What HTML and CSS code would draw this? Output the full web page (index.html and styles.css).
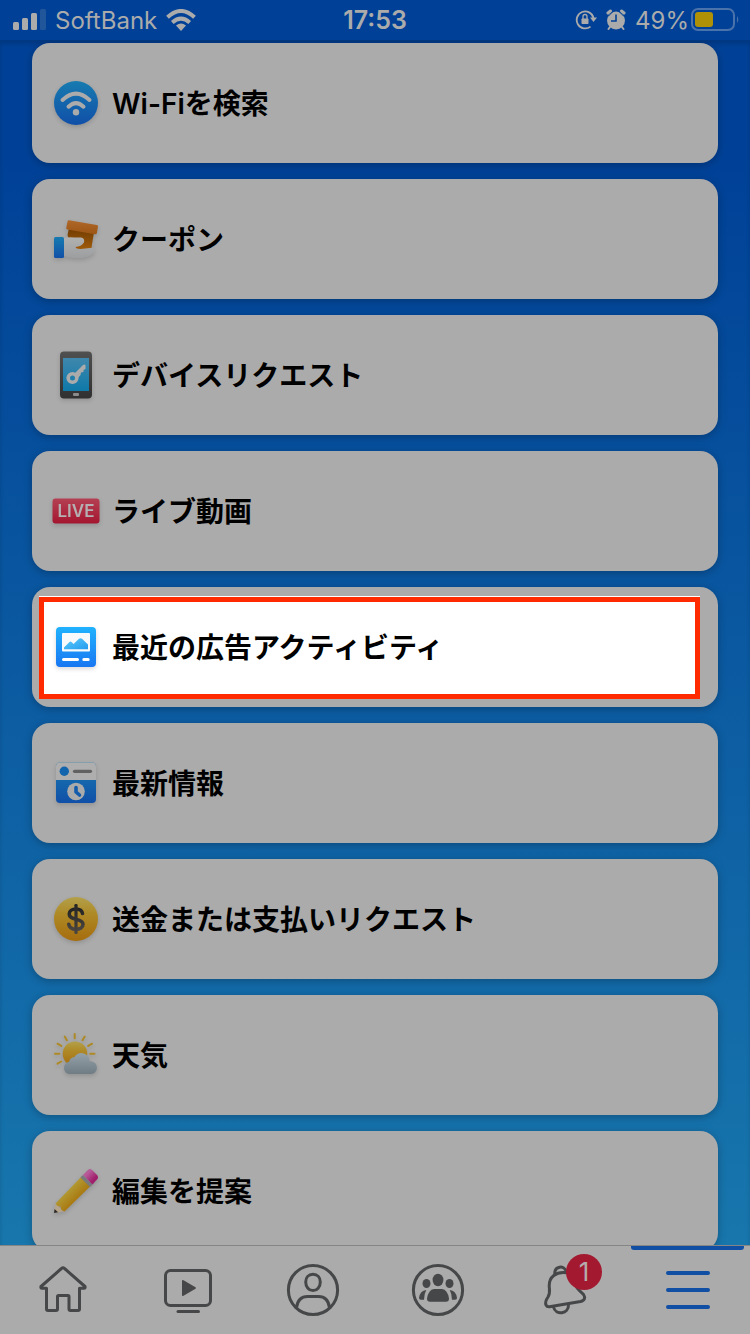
FILE: index.html
```html
<!DOCTYPE html>
<html lang="ja">
<head>
    <meta charset="UTF-8">
    <meta name="viewport" content="width=device-width, initial-scale=1.0">
    <title>メニュー</title>
    <link rel="stylesheet" href="styles.css">
</head>
<body>
    <header class="status">
        <div class="status-left">
            <svg width="33" height="22" viewBox="0 0 33 22">
                <g fill="#ababab">
                    <rect x="0" y="13" width="6" height="8" rx="1.5"/>
                    <rect x="9" y="9" width="6" height="12" rx="1.5"/>
                    <rect x="18" y="4" width="6" height="17" rx="1.5"/>
                    <rect x="27" y="0" width="6" height="21" rx="1.5" opacity=".2"/>
                </g>
            </svg>
            <span class="carrier">SoftBank</span>
            <svg width="30" height="22" viewBox="0 0 30 22">
                <g fill="none" stroke="#ababab" stroke-width="4">
                    <path d="M1.500 8.300Q15-4.300 28.500 8.300"/>
                    <path d="M6.300 13.500Q15 5.700 23.700 13.500"/>
                </g>
                <path d="M10 16.500Q15 12.500 20 16.500L15 22Z" fill="#ababab"/>
            </svg>
        </div>
        <span class="time">17:53</span>
        <div class="status-right">
            <svg width="22" height="22" viewBox="0 0 22 22">
                <path d="M15.500 17.600A8.500 8.500 0 1 1 18.500 9" fill="none" stroke="#ababab" stroke-width="1.800"/>
                <path d="M15 8.500h7l-3.500 4.500z" fill="#ababab"/>
                <rect x="6.500" y="9.500" width="7" height="5.500" rx=".8" fill="#ababab"/>
                <path d="M8 10V7.500a2 2 0 0 1 4 0V10" fill="none" stroke="#ababab" stroke-width="1.300"/>
            </svg>
            <svg width="20" height="22" viewBox="0 0 20 22">
                <circle cx="10" cy="11.500" r="9" fill="#ababab"/>
                <g stroke="#ababab" stroke-width="3" stroke-linecap="round">
                    <path d="M2 4L4.500 2M18 4L15.500 2"/>
                    <path d="M4 18L2.500 20M16 18L17.500 20" stroke-width="2"/>
                </g>
                <path d="M2 7.500L7 2.500M18 7.500L13 2.500" stroke="#004197"/>
                <path d="M10 5.500V12H5" fill="none" stroke="#004197" stroke-width="1.600"/>
            </svg>
            <span class="percent">49%</span>
            <svg width="48" height="24" viewBox="0 0 48 24">
                <rect x="1" y="1" width="42" height="21" rx="6" fill="none" stroke="#4a72ab" stroke-width="2"/>
                <rect x="4" y="4" width="18" height="15" rx="3" fill="#af9108"/>
                <path d="M46 8q2.500 3.500 0 7z" fill="#4a72ab"/>
            </svg>
        </div>
    </header>

    <main class="list">
        <a class="card" href="#">
            <svg class="icon" viewBox="0 0 48 48">
                <defs>
                    <linearGradient id="blue" x2="0" y2="1"><stop stop-color="#177bb0"/><stop offset="1" stop-color="#104fa8"/></linearGradient>
                </defs>
                <circle cx="24" cy="24" r="22" fill="url(#blue)"/>
                <g fill="none" stroke="#ababab" stroke-width="4" stroke-linecap="round">
                    <path d="M10.500 21Q24 8.300 37.500 21"/>
                    <path d="M16.500 27.700Q24 20.500 31.500 27.700"/>
                </g>
                <circle cx="24" cy="33.300" r="3.200" fill="#ababab"/>
            </svg>
            <span class="label">Wi-Fiを検索</span>
        </a>
        <a class="card" href="#">
            <svg class="icon" viewBox="0 0 48 48">
                <defs>
                    <linearGradient id="roll" x2="0" y2="1"><stop stop-color="#b0682a"/><stop offset="1" stop-color="#9d5514"/></linearGradient>
                    <linearGradient id="ticket" x2="0" y2="1"><stop stop-color="#703b00"/><stop offset="1" stop-color="#9e5b0c"/></linearGradient>
                    <linearGradient id="hand" x2="0" y2="1"><stop stop-color="#b1b1b1"/><stop offset="1" stop-color="#9c9ea0"/></linearGradient>
                </defs>
                <path d="M17 13L42 17.500C41 24 40 28 39.500 34H20L15.500 20Z" fill="url(#ticket)"/>
                <path d="M17 5.200L44.800 10.100Q46.200 10.400 46 11.800L44.800 18.200Q44.500 19.600 43 19.300L15.500 14.500Q14 14.100 14.300 12.700L15.600 6.200Q15.800 5 17 5.200Z" fill="url(#roll)"/>
                <path d="M12 23Q17 21.800 22 22.500H29Q33 23 32 27.500Q29.500 31.500 23.500 32Q24 34.500 31 33.800L40 32.800Q43.500 33.500 42 37.500Q37 43 27 43Q18 43 12 41Z" fill="url(#hand)"/>
                <rect x="2" y="22" width="10" height="21" rx="1.500" fill="url(#blue)"/>
            </svg>
            <span class="label">クーポン</span>
        </a>
        <a class="card" href="#">
            <svg class="icon" viewBox="0 0 48 48">
                <defs>
                    <linearGradient id="body" x2="0" y2="1"><stop stop-color="#505050"/><stop offset="1" stop-color="#303030"/></linearGradient>
                    <linearGradient id="screen" x2="0" y2="1"><stop stop-color="#3f87ac"/><stop offset="1" stop-color="#0e79a9"/></linearGradient>
                </defs>
                <rect x="8" y="0.500" width="32" height="47" rx="4" fill="url(#body)"/>
                <rect x="11" y="7" width="26" height="33" fill="url(#screen)"/>
                <rect x="21" y="42" width="6" height="3" rx="1" fill="#8b8b8b"/>
                <circle cx="20.500" cy="27" r="4.300" fill="none" stroke="#ababab" stroke-width="3.600"/>
                <path d="M22.500 22.500L31 14Q33.500 13 33.500 14.500V18L31.500 19V21L29 21.500L28.500 24L26 27Z" fill="#ababab"/>
            </svg>
            <span class="label">デバイスリクエスト</span>
        </a>
        <a class="card" href="#">
            <svg class="icon" viewBox="0 0 48 48">
                <defs>
                    <linearGradient id="red" x2="0" y2="1"><stop stop-color="#b54053"/><stop offset="1" stop-color="#a4162f"/></linearGradient>
                </defs>
                <rect x="0.500" y="11.500" width="47" height="25" rx="3" fill="url(#red)"/>
                <text class="live" x="24" y="30" text-anchor="middle">LIVE</text>
            </svg>
            <span class="label">ライブ動画</span>
        </a>
        <a class="card selected" href="#">
            <svg class="icon" viewBox="0 0 48 48">
                <defs>
                    <linearGradient id="bright" x2="0" y2="1"><stop stop-color="#20b2ff"/><stop offset="1" stop-color="#1877f2"/></linearGradient>
                    <linearGradient id="hills" x2="1" y2="1"><stop stop-color="#5cccfa"/><stop offset="1" stop-color="#249bf0"/></linearGradient>
                </defs>
                <rect x="4" y="4" width="40" height="40" rx="4" fill="url(#bright)"/>
                <rect x="10" y="10" width="28" height="18.500" rx="1" fill="#f7f9fa"/>
                <path d="M12 26.300V24.500L17.500 19Q18.500 18 19.500 19L21.500 21L27 15.800Q28.500 14.500 30 15.800L36 21.500V26.300Z" fill="url(#hills)"/>
                <path d="M11.500 36.500H25.500M31.800 36.500H36.200" stroke="#fff" stroke-width="3" stroke-linecap="round"/>
            </svg>
            <span class="label">最近の広告アクティビティ</span>
        </a>
        <a class="card" href="#">
            <svg class="icon" viewBox="0 0 48 48">
                <rect x="4" y="3.500" width="40" height="40.500" rx="4" fill="url(#blue)"/>
                <path d="M4 21V7.500Q4 3.500 8 3.500H40Q44 3.500 44 7.500V21Z" fill="#aeaeae"/>
                <circle cx="12.300" cy="12.300" r="4.700" fill="#1265ac"/>
                <path d="M22.500 12.300H38.500" stroke="#616161" stroke-width="3.200" stroke-linecap="round"/>
                <circle cx="24" cy="32.500" r="8.800" fill="#ababab"/>
                <path d="M24 28.500V33L27.500 36" fill="none" stroke="#125cab" stroke-width="3.600" stroke-linecap="round" stroke-linejoin="round"/>
            </svg>
            <span class="label">最新情報</span>
        </a>
        <a class="card" href="#">
            <svg class="icon" viewBox="0 0 48 48">
                <defs>
                    <linearGradient id="gold" x2="0" y2="1"><stop stop-color="#b3a04a"/><stop offset=".4" stop-color="#ae8925"/><stop offset="1" stop-color="#a66c0d"/></linearGradient>
                    <linearGradient id="ink" x2="0" y2="1"><stop stop-color="#242424"/><stop offset="1" stop-color="#4a4540"/></linearGradient>
                </defs>
                <circle cx="24" cy="24" r="22" fill="url(#gold)"/>
                <path d="M30.500 18.500C30 15.500 27.500 14 24 14C20 14 17.200 16 17.200 19C17.200 22.500 20 23.300 24 24.200C28.500 25.200 31 26.200 31 29.300C31 32.500 28 34.300 24 34.300C20 34.300 17.200 32.500 16.800 29.300" fill="none" stroke="url(#ink)" stroke-width="3.600" stroke-linecap="round"/>
                <rect x="22.400" y="9" width="3.200" height="30" rx="1.200" fill="url(#ink)"/>
            </svg>
            <span class="label">送金または支払いリクエスト</span>
        </a>
        <a class="card" href="#">
            <svg class="icon" viewBox="0 0 48 48">
                <defs>
                    <linearGradient id="cloud" x2="0" y2="1"><stop stop-color="#94a1a9"/><stop offset="1" stop-color="#6f7c83"/></linearGradient>
                </defs>
                <circle cx="23" cy="22.700" r="12.300" fill="url(#gold)"/>
                <path d="M22.700 3V7.300M12.700 5.500L14.900 9.300M5.500 12.700L9.300 14.900M3 22.700H7.300M5.500 32.700L9.300 30.500M32.700 5.500L30.500 9.300M40 12.700L36.200 14.900M42.500 22.700H38.200" stroke="#ae8a25" stroke-width="2" stroke-linecap="round"/>
                <path d="M18 43Q12 42.500 12 37Q12.300 31.800 17 30.800Q18 26.500 22.500 26Q25 22 29.500 22Q36.500 22.500 37.500 30Q45 30.500 45 37Q44.500 42.500 39 43Z" fill="url(#cloud)"/>
            </svg>
            <span class="label">天気</span>
        </a>
        <a class="card" href="#">
            <svg class="icon" viewBox="0 0 48 48">
                <defs>
                    <linearGradient id="wood" x2="1" y2="1"><stop offset=".35" stop-color="#b29b35"/><stop offset=".65" stop-color="#a9760d"/></linearGradient>
                    <linearGradient id="rubber" x2="1" y2="1"><stop offset=".3" stop-color="#b65a98"/><stop offset=".7" stop-color="#a01f6c"/></linearGradient>
                </defs>
                <path d="M2 46L3.500 36.500L11.500 44.500Z" fill="#b6a48c"/>
                <path d="M2 46L2.600 42L6 45.300Z" fill="#292929"/>
                <path d="M3.500 36.500L29.500 9.500L39 18.500L12.500 44.500L9.500 43L8.500 39.500L5.500 39Z" fill="url(#wood)"/>
                <path d="M28.500 10.500L31 8L40.500 17.500L38 20Z" fill="#77797c"/>
                <path d="M31 8L36 3Q38 1 40 3L45 8Q47 10 45 12.500L40.500 17.500Z" fill="url(#rubber)"/>
            </svg>
            <span class="label">編集を提案</span>
        </a>
    </main>

    <nav class="tabs">
        <a class="tab" href="#" aria-label="ホーム">
            <svg viewBox="0 0 56 56">
                <path d="M26.500 6.500Q28 5 29.500 6.500L50 24.500Q50.500 26.300 49 26.300H44.500V47Q44.500 48.500 43 48.500H35.500Q34 48.500 34 47V34.500Q34 33.500 33 33.500H23.500Q22.500 33.500 22.500 34.500V47Q22.500 48.500 21 48.500H13Q11.500 48.500 11.500 47V26.300H7Q5.500 26.300 6 24.500Z"/>
            </svg>
        </a>
        <a class="tab" href="#" aria-label="動画">
            <svg viewBox="0 0 56 56">
                <rect x="5.500" y="8.500" width="45" height="35" rx="5"/>
                <path class="solid" d="M22 19Q22 17.500 23.500 18.300L35.500 25.200Q36.500 26 35.500 26.800L23.500 33.700Q22 34.500 22 33Z"/>
                <path d="M18 49.500H38.500"/>
            </svg>
        </a>
        <a class="tab" href="#" aria-label="プロフィール">
            <svg viewBox="0 0 56 56">
                <circle cx="28" cy="28" r="24.600"/>
                <path d="M28 12.300C32.500 12.300 35.300 15.500 35.300 20C35.300 25 32 28.600 28 28.600C24 28.600 20.700 25 20.700 20C20.700 15.500 23.500 12.300 28 12.300Z"/>
                <path d="M11.500 45.500C12.500 38.500 16.500 34.500 22.500 34.500H33.500C39.500 34.500 43.500 38.500 44.500 45.500"/>
            </svg>
        </a>
        <a class="tab" href="#" aria-label="グループ">
            <svg viewBox="0 0 56 56">
                <circle cx="28" cy="28" r="24.600"/>
                <g class="solid">
                    <ellipse cx="28" cy="18" rx="5.400" ry="6.200"/>
                    <ellipse cx="16.500" cy="21.500" rx="4" ry="4.600"/>
                    <ellipse cx="39.500" cy="21.500" rx="4" ry="4.600"/>
                    <path d="M24 27H32Q37.500 27.500 39 36.500Q39 39.700 36 39.700H20Q17 39.700 17 36.500Q18.500 27.500 24 27Z"/>
                    <path d="M16.300 28Q10 28.500 9 36Q9 37.800 11 37.800H14Q14 32 16.300 28ZM39.700 28Q46 28.500 47 36Q47 37.800 45 37.800H42Q42 32 39.700 28Z"/>
                </g>
            </svg>
        </a>
        <a class="tab" href="#" aria-label="お知らせ">
            <svg viewBox="0 0 56 56">
                <path d="M19.800 11.500C19.500 4 29 3 31 9"/>
                <path d="M31 10.700C21 9.500 14 15 14.200 24C14.400 28 15.500 31 13 35C10.500 38.500 10 40.500 11 43Q12 45 14.500 44.700L45.500 39.500C50 38.500 50.500 35.500 48.500 32.500C46 29.500 43.500 28.500 41.500 25"/>
                <path d="M18.500 45C20.500 53.500 34 52.500 33.500 42.500"/>
            </svg>
            <span class="badge">1</span>
        </a>
        <a class="tab active" href="#" aria-label="メニュー">
            <svg viewBox="0 0 56 56">
                <path d="M8 11H48M8 28H48M8 45H48"/>
            </svg>
        </a>
    </nav>
</body>
</html>
```
FILE: styles.css
```css
* {
    box-sizing: border-box;
}

body {
    display: flex;
    flex-direction: column;
    height: 100vh;
    margin: 0;
    overflow: hidden;
    font-family: Inter, "Noto Sans CJK JP", sans-serif;
    background: linear-gradient(#004197 12%, #1877ad 94%);
}

a {
    color: inherit;
    text-decoration: none;
}

svg {
    flex: none;
}

/* status bar */
.status {
    display: grid;
    grid-template-columns: 1fr auto 1fr;
    align-items: center;
    height: 40px;
    padding: 0 11px;
    flex: none;
    font-size: 24px;
    color: #ababab;
    background-color: #004197;
}

.status-left,
.status-right {
    display: flex;
    align-items: center;
    gap: 9px;
}

.status-left {
    padding-left: 2px;
}

.status-right {
    justify-content: flex-end;
}

.time {
    font-size: 25px;
    font-weight: 600;
}

.percent {
    margin-right: -7px;
}

/* shortcut list */
.list {
    display: flex;
    flex-direction: column;
    flex: 1;
    gap: 16px;
    min-height: 0;
    padding: 3px 32px 0;
    overflow: hidden;
    box-shadow: inset 0 4px 4px rgba(0, 0, 0, 0.15);
}

.card {
    position: relative;
    display: flex;
    align-items: center;
    gap: 12px;
    flex: none;
    height: 120px;
    padding: 0 20px;
    border-radius: 18px;
    background-color: #ababab;
    box-shadow: 0 2px 8px rgba(0, 0, 0, 0.25);
}

.icon {
    position: relative;
    width: 48px;
    height: 48px;
    filter: drop-shadow(0 2px 2px rgba(0, 0, 0, 0.15));
}

.label {
    position: relative;
    padding-bottom: 2px;
    font-size: 28px;
    font-weight: 600;
    color: #000;
}

.live {
    font-size: 17px;
    font-weight: 600;
    fill: #b5b0b1;
}

/* marker frame around the chosen card */
.selected::before {
    content: "";
    position: absolute;
    inset: 10px 18px 8px 7px;
    border: 5px solid #ff2a00;
    background-color: #fff;
    box-shadow: 0 -1px 0 #fff;
}

/* bottom tabs */
.tabs {
    display: grid;
    grid-template-columns: repeat(6, 1fr);
    flex: none;
    height: 89px;
    border-top: 1px solid #858585;
    background-color: #ababab;
}

.tab {
    position: relative;
    display: flex;
    align-items: center;
    justify-content: center;
}

.tab svg {
    width: 56px;
    height: 56px;
    fill: none;
    stroke: #464748;
    stroke-width: 3;
    stroke-linecap: round;
    stroke-linejoin: round;
}

.tab .solid {
    fill: #464748;
    stroke: none;
}

.tab.active svg {
    stroke: #104fa4;
    stroke-width: 4;
}

.tab.active::before {
    content: "";
    position: absolute;
    top: 0;
    left: 6px;
    right: 6px;
    height: 4px;
    border-radius: 0 0 3px 3px;
    background-color: #104fa4;
}

.badge {
    position: absolute;
    top: 8px;
    left: 66px;
    width: 36px;
    height: 36px;
    border-radius: 50%;
    font-size: 26px;
    line-height: 36px;
    text-align: center;
    color: #b5abad;
    background-color: #a31a30;
}
```
